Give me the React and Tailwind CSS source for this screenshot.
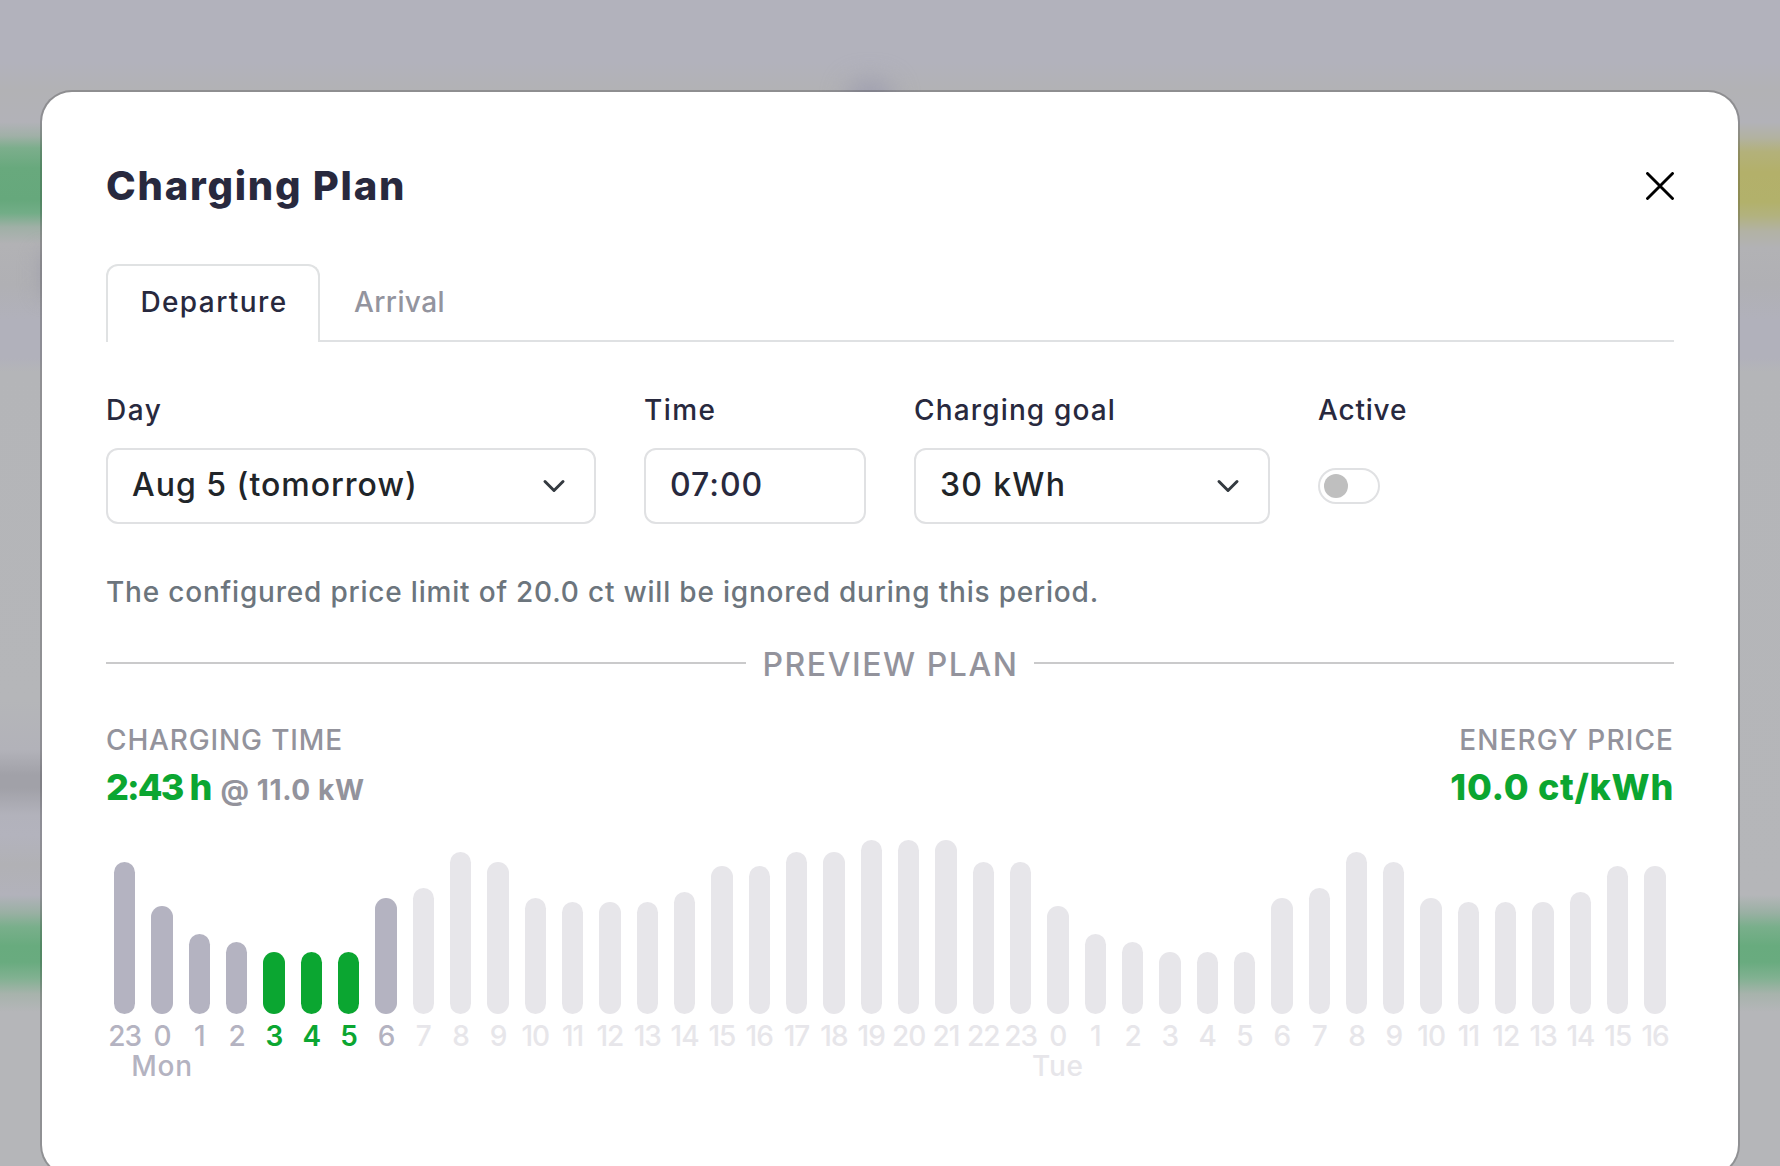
const PRICES = [
  152, 108, 80, 72, 62, 62, 62, 116, 126, 162, 152, 116, 112, 112, 112, 122,
  148, 148, 162, 162, 174, 174, 174, 152, 152, 108, 80, 72, 62, 62, 62, 116,
  126, 162, 152, 116, 112, 112, 112, 122, 148, 148,
];

const SLOTS = PRICES.map((height, i) => {
  const hour = (23 + i) % 24;
  const state = i > 7 ? "future" : i > 3 && i < 7 ? "charging" : "idle";
  const day = i === 1 ? "Mon" : i === 25 ? "Tue" : "";
  return { height, hour, state, day };
});

const BAR = {
  idle: "bg-[#b4b3c1]",
  charging: "bg-[#0ba631]",
  future: "bg-[#e7e6ea]",
};
const LABEL = {
  idle: "text-[#b4b3c1]",
  charging: "text-[#0ba631] font-semibold",
  future: "text-[#e7e6ea]",
};

function Chevron() {
  return (
    <svg viewBox="0 0 16 16" className="mt-0.5 h-6 w-6 shrink-0" fill="none">
      <path d="m2 5 6 6 6-6" stroke="#343a40" strokeWidth="2" strokeLinecap="round" strokeLinejoin="round" />
    </svg>
  );
}

function Field({ label, labelClass, width, children }) {
  return (
    <div className={width}>
      <div className={`text-[28px] leading-10 ${labelClass}`}>{label}</div>
      {children}
    </div>
  );
}

function Control({ children }) {
  return (
    <div className="mt-[18px] flex h-[76px] items-center justify-between rounded-xl border-2 border-[#e0e1e3] pr-7 pb-0.5 pl-6 text-[32px]">
      {children}
    </div>
  );
}

function Backdrop() {
  return (
    <div className="absolute inset-0 flex">
      <div className="flex-1 bg-[linear-gradient(180deg,#b2b2bc_0,#b2b2bc_62px,#b2b2b5_90px,#b2b2b8_122px,#a0b0a7_136px,#7cae8c_148px,#68a97d_168px,#66a87c_200px,#72ad87_213px,#9fb0a6_227px,#b2b2b5_244px,#b0b0b4_285px,#b1b1bb_320px,#b1b1bb_358px,#b4b5b8_372px,#b5b6b9_700px,#b2b2b9_750px,#a1a1a8_775px,#a1a1a8_788px,#b2b2bb_815px,#b3b3bd_835px,#b1b1b5_865px,#b2b2bb_895px,#99b0a3_913px,#79af8b_927px,#68ab7e_946px,#69ab7f_962px,#81b191_978px,#a7b3ac_994px,#b5b6b9_1012px,#b5b6b9_100%)]" />
      <div className="flex-1 bg-[linear-gradient(180deg,#b2b2bc_0,#b2b2bc_62px,#b2b2b5_90px,#b2b2b8_122px,#b2b2a0_138px,#b3b17a_152px,#b3b06a_172px,#b2b16b_202px,#b2b27f_216px,#b2b2a4_231px,#b2b2b5_248px,#b0b0b4_285px,#b1b1bb_320px,#b1b1bb_358px,#b4b5b8_372px,#b5b6b9_895px,#99b0a3_913px,#79af8b_927px,#68ab7e_946px,#69ab7f_962px,#81b191_978px,#a7b3ac_994px,#b5b6b9_1012px,#b5b6b9_100%)]" />
      <div className="absolute top-[80px] left-[846px] h-10 w-12 rounded-full bg-[#9f9fb0] blur-[12px]" />
      <div className="absolute top-[250px] left-[38px] h-12 w-5 rounded-full bg-[#a3a3ac] blur-[9px]" />
    </div>
  );
}

export default function App() {
  return (
    <div className="relative h-[1166px] w-[1780px] overflow-hidden font-['Inter',sans-serif] font-medium text-[#28293e]">
      <Backdrop />
      <main className="relative mx-10 mt-[90px] h-[1087px] rounded-[32px] border-2 border-black/20 bg-white bg-clip-padding px-16 pt-[70px]">
        <header className="flex h-12 items-center justify-between">
          <h1 className="text-[40px] leading-[48px] font-extrabold tracking-[1.75px]">Charging Plan</h1>
          <button aria-label="Close">
            <svg viewBox="0 0 28 28" className="h-7 w-7" stroke="#000" strokeWidth="2.9" strokeLinecap="round">
              <path d="M1.5 1.5l25 25M26.5 1.5l-25 25" />
            </svg>
          </button>
        </header>

        <nav className="mt-[54px] flex h-[78px] text-[28px]">
          <div className="flex w-[214px] items-center justify-center rounded-t-xl border-2 border-b-0 border-[#e0e2e3] pb-1 pl-0.5 tracking-[1.4px]">
            Departure
          </div>
          <div className="flex flex-1 items-center border-b-2 border-[#dfe1e3] pl-[34px] tracking-[0.4px] text-[#93949e]">
            Arrival
          </div>
        </nav>

        <section className="mt-12 flex gap-12">
          <Field label="Day" labelClass="tracking-[1.6px]" width="w-[490px]">
            <Control>
              <span className="tracking-[1px] text-[#212529]">Aug 5 (tomorrow)</span>
              <Chevron />
            </Control>
          </Field>
          <Field label="Time" labelClass="tracking-[1.4px]" width="w-[222px]">
            <Control>
              <span className="tracking-[1px]">07:00</span>
            </Control>
          </Field>
          <Field label="Charging goal" labelClass="tracking-[1.15px]" width="w-[356px]">
            <Control>
              <span className="tracking-[1.3px] text-[#212529]">30 kWh</span>
              <Chevron />
            </Control>
          </Field>
          <Field label="Active" labelClass="tracking-[0.8px]" width="w-[120px]">
            <div className="mt-[38px] flex h-9 w-[62px] items-center rounded-full border-2 border-[#e0e1e3] pl-1">
              <div className="h-6 w-6 rounded-full bg-[#bfbfbf]" />
            </div>
          </Field>
        </section>

        <p className="mt-12 text-[28px] leading-10 tracking-[0.8px] whitespace-nowrap text-[#6c757d]">
          The configured price limit of 20.0 ct will be ignored during this period.
        </p>

        <div className="mt-[33px] flex h-10 items-center text-[#93939c]">
          <div className="mb-1 h-0.5 flex-1 bg-[#cacacb]" />
          <h2 className="w-[288px] pl-px text-center text-[32px] leading-10 tracking-[1.55px]">PREVIEW PLAN</h2>
          <div className="mb-1 h-0.5 flex-1 bg-[#cacacb]" />
        </div>

        <section className="mt-[35px] flex justify-between text-[#93939c]">
          <div>
            <div className="text-[28px] leading-10 tracking-[0.85px]">CHARGING TIME</div>
            <div className="mt-[3px] flex h-12 items-baseline gap-[10px] font-bold whitespace-nowrap">
              <span className="text-[36px] leading-[48px] font-extrabold tracking-[-1.9px] text-[#0ba631]">2:43{"\u2005"}h</span>
              <span className="text-[28px] leading-[48px] tracking-[0.6px]">@ 11.0 kW</span>
            </div>
          </div>
          <div className="text-right">
            <div className="text-[28px] leading-10 tracking-[1.1px]">ENERGY PRICE</div>
            <div className="mt-[3px] text-[36px] leading-[48px] font-extrabold tracking-[0.7px] text-[#0ba631]">10.0 ct/kWh</div>
          </div>
        </section>

        <section className="mt-[29px] flex">
          {SLOTS.map((slot, i) => (
            <div key={i} className={`flex w-0 flex-1 flex-col items-center text-[28px] leading-[30px] ${LABEL[slot.state]}`}>
              <div className="flex h-[174px] w-4/7 items-end">
                <div className={`w-full rounded-full ${BAR[slot.state]}`} style={{ height: slot.height }} />
              </div>
              <div className="mt-[7px] tracking-[-1px]">{slot.hour}</div>
              <div className="font-medium tracking-[0.8px]">{slot.day}</div>
            </div>
          ))}
        </section>
      </main>
    </div>
  );
}
